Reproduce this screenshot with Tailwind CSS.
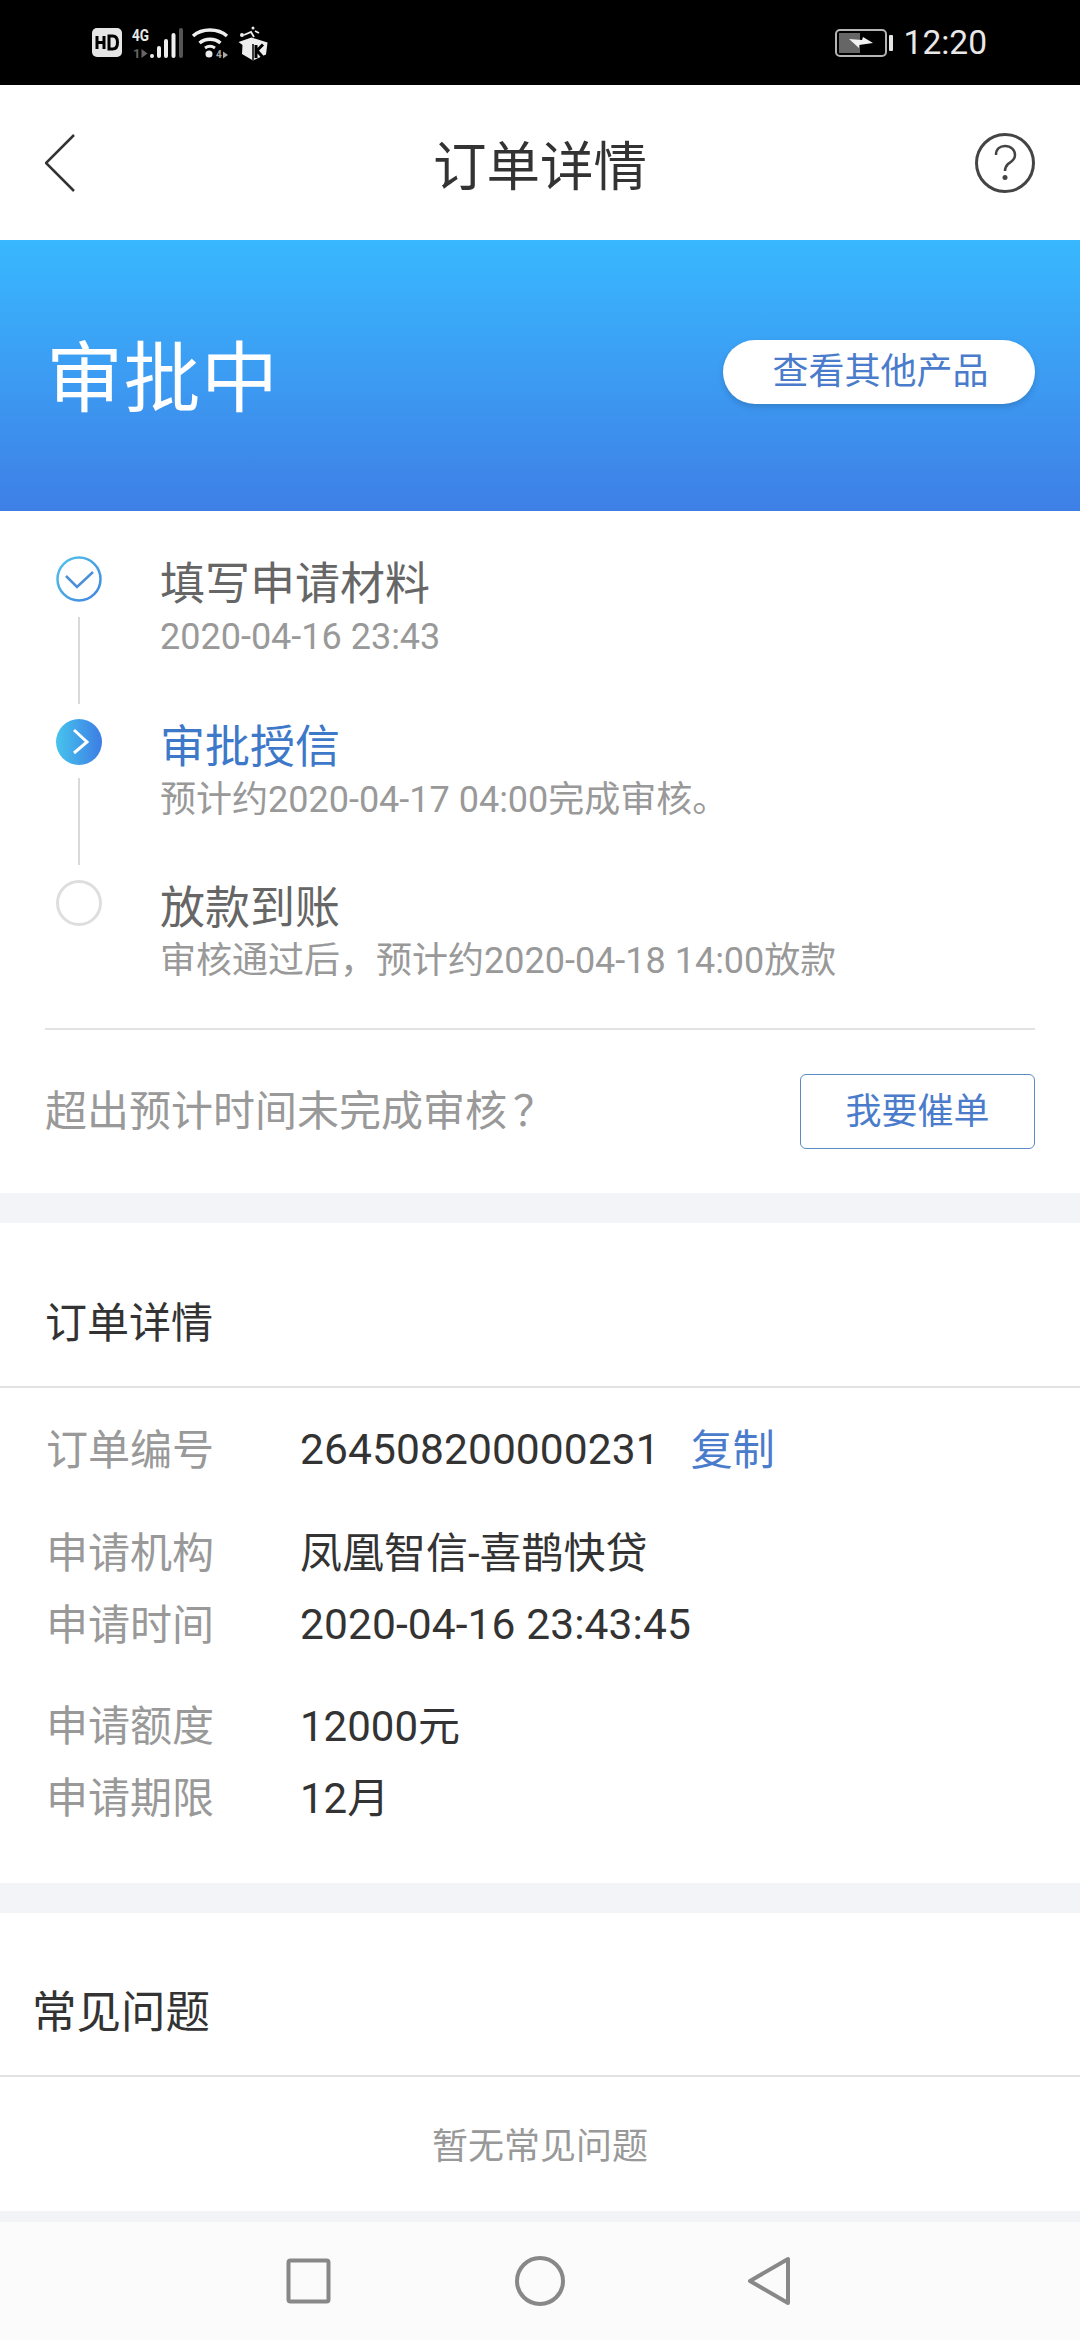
<!DOCTYPE html>
<html lang="zh-CN">
<head>
    <meta charset="UTF-8">
    <meta name="viewport" content="width=device-width, initial-scale=1.0">
    <title>订单详情</title>
    <script src="https://cdn.jsdelivr.net/npm/@tailwindcss/browser@4"></script>
</head>
<body class="bg-[#f2f4f7] font-['Roboto','Noto_Sans_CJK_SC',sans-serif]">
    <div class="w-[1080px] h-[2340px] flex flex-col overflow-hidden">
        <!-- status bar -->
        <div class="h-[85px] bg-black flex items-center justify-between pl-[92px] pr-[93px] text-[#e8e8e8]">
            <div class="flex items-center">
                <svg width="30" height="30" viewBox="0 0 30 30"><rect width="30" height="29" rx="5" fill="#e6e6e6"/><path d="M5 8v13M5 14.500h7M12 8v13" stroke="#000" stroke-width="3" fill="none"/><path d="M17 8v13h3.500c3.500 0 5-2.500 5-6.500s-1.500-6.500-5-6.500z" stroke="#000" stroke-width="3" fill="none"/></svg>
                <svg class="ml-[10px] overflow-visible" width="52" height="32" viewBox="0 0 52 32"><text x="0" y="14" font-size="17" font-weight="700" fill="#e8e8e8" font-family="Roboto" textLength="17" lengthAdjust="spacingAndGlyphs">4G</text><text x="1" y="31" font-size="13" font-weight="700" fill="#666" font-family="Roboto">1</text><path d="M9.500 22l6 4.500-6 4.500z" fill="#666"/><rect x="18" y="27" width="4" height="4" rx="2" fill="#eee"/><rect x="25" y="19" width="4" height="12" rx="2" fill="#eee"/><rect x="32" y="12" width="4" height="19" rx="2" fill="#eee"/><rect x="39.500" y="6" width="4" height="25" rx="2" fill="#eee"/><rect x="47" y="1" width="4" height="30" rx="2" fill="#555"/></svg>
                <svg class="ml-[8px] overflow-visible" width="36" height="32" viewBox="0 0 36 32"><path d="M1 9c9-8 25-8 34 0M7.500 16c6-5 15-5 21 0" stroke="#eee" stroke-width="3.500" fill="none"/><path d="M13 21c3-2 7-2 10 0" stroke="#eee" stroke-width="3" fill="none"/><circle cx="17" cy="27" r="3.500" fill="#eee"/><text x="24" y="31" font-size="10" font-weight="700" fill="#aaa" font-family="Roboto">4</text><path d="M31 24.500l5 3.500-5 3.500z" fill="#aaa"/></svg>
                <svg class="ml-[10px]" width="32" height="36" viewBox="0 0 32 36"><path d="M0.500 17l13-4.500 16 5-1.500 12-13 6-11-6.500 .5-9z" fill="#eee"/><path d="M15 19v16" stroke="#000" stroke-width="1.500"/><path d="M18 20v13M25 19.500l-6 6 6 7" stroke="#000" stroke-width="3" fill="none"/><path d="M6 10l7-3 3 5M17 6l4 2" stroke="#eee" stroke-width="1.800" fill="none"/><circle cx="4" cy="10" r="2" fill="#eee"/><circle cx="15" cy="3" r="1.500" fill="#eee"/></svg>
            </div>
            <div class="flex items-center">
                <svg width="58" height="28" viewBox="0 0 58 28"><rect x="1" y="1" width="50" height="26" rx="4" fill="none" stroke="#b5b5b5" stroke-width="2"/><rect x="4" y="4" width="21" height="20" fill="#666"/><path d="M14 10l13 1 1-3 10 6-14 2 0 3z" fill="#f2f2f2"/><rect x="54" y="6" width="4" height="16" rx="1" fill="#e5e5e5"/></svg>
                <span class="ml-[11px] text-[33.500px] leading-none">12:20</span>
            </div>
        </div>

        <!-- nav -->
        <div class="h-[155px] bg-white flex items-center justify-between px-[45px]">
            <div class="w-[60px]">
                <svg width="30" height="58" viewBox="0 0 30 58"><path d="M29 1L1 29l28 28" fill="none" stroke="#333" stroke-width="2.500"/></svg>
            </div>
            <h1 class="text-[53.500px] text-[#333] pt-[11px]">订单详情</h1>
            <svg width="60" height="60" viewBox="0 0 60 60"><circle cx="30" cy="30" r="28.500" fill="none" stroke="#444" stroke-width="3"/><path d="M21 22C21 16 25 13 30 13C36 13 40 17 40 22C40 27 36 29 33 31C31 33 30 34 30 38" fill="none" stroke="#444" stroke-width="2.500"/><circle cx="30" cy="44.500" r="2.500" fill="#444"/></svg>
        </div>

        <!-- status banner -->
        <div class="h-[271px] bg-gradient-to-b from-[#38b8fe] to-[#3e7fe6] flex items-center justify-between pl-[46px] pr-[45px]">
            <div class="text-[77px] text-white tracking-[0.500px] pt-[11px]">审批中</div>
            <div class="w-[312px] h-[64px] mb-[7px] pl-[3px] rounded-full bg-white shadow-[0_3px_6px_rgba(0,0,0,0.15)] flex items-center justify-center text-[36px] text-[#4a7ccb]">查看其他产品</div>
        </div>

        <!-- progress -->
        <div class="bg-white h-[682px] flex flex-col px-[45px]">
            <div class="pt-[45px] h-[517px] flex flex-col">
                <div class="flex h-[163px]">
                    <div class="w-[68px] flex flex-col items-center">
                        <svg width="46" height="46" viewBox="0 0 46 46"><defs><linearGradient id="g1" x1="0" y1="0" x2="1" y2="1"><stop offset="0" stop-color="#52c5ea"/><stop offset="1" stop-color="#4083e0"/></linearGradient></defs><circle cx="23" cy="23" r="21.500" fill="none" stroke="url(#g1)" stroke-width="2.500"/><path d="M10 20l11 11 16-15" fill="none" stroke="#4a8fd8" stroke-width="2.500"/></svg>
                        <div class="w-[2px] h-[87px] bg-[#d9d9d9] mt-[15px]"></div>
                    </div>
                    <div class="ml-[47px]">
                        <div class="text-[45px] leading-[50px] pt-[4px] text-[#666]">填写申请材料</div>
                        <div class="text-[36px] leading-[54px] text-[#999]">2020-04-16 23:43</div>
                    </div>
                </div>
                <div class="flex h-[161px]">
                    <div class="w-[68px] flex flex-col items-center">
                        <svg width="46" height="46" viewBox="0 0 46 46"><defs><linearGradient id="g2" x1="0" y1="0" x2="1" y2="0"><stop offset="0" stop-color="#47c4ed"/><stop offset="1" stop-color="#3d7de4"/></linearGradient></defs><circle cx="23" cy="23" r="23" fill="url(#g2)"/><path d="M18 11l13 12-13 11" fill="none" stroke="#fff" stroke-width="3"/></svg>
                        <div class="w-[2px] h-[87px] bg-[#d9d9d9] mt-[13px]"></div>
                    </div>
                    <div class="ml-[47px]">
                        <div class="text-[45px] leading-[50px] pt-[4px] text-[#3d78c9]">审批授信</div>
                        <div class="text-[36px] leading-[54px] text-[#999]">预计约2020-04-17 04:00完成审核。</div>
                    </div>
                </div>
                <div class="flex">
                    <div class="w-[68px] flex flex-col items-center">
                        <div class="w-[46px] h-[46px] rounded-full border-[3px] border-[#dedede]"></div>
                    </div>
                    <div class="ml-[47px]">
                        <div class="text-[45px] leading-[50px] pt-[4px] text-[#666]">放款到账</div>
                        <div class="text-[36px] leading-[54px] text-[#999]">审核通过后，预计约2020-04-18 14:00放款</div>
                    </div>
                </div>
            </div>
            <div class="border-t-2 border-[#e2e2e2] flex items-center justify-between h-[165px]">
                <div class="text-[42px] text-[#999]">超出预计时间未完成审核<span class="ml-[6px]">？</span></div>
                <div class="w-[235px] h-[75px] rounded-[6px] border-[1.500px] border-[#5a8cc4] flex items-center justify-center text-[36px] text-[#4a7ccb]">我要催单</div>
            </div>
        </div>

        <!-- order details -->
        <div class="bg-white mt-[30px] h-[660px]">
            <div class="h-[165px] border-b-2 border-[#e2e2e2] flex items-center pl-[45px] pt-[37px] text-[42px] text-[#333]">订单详情</div>
            <div class="pl-[46px] pt-[28px] text-[42px] text-[#333]">
                <div class="flex h-[68px] items-center"><span class="w-[254px] text-[#999]">订单编号</span><span class="text-[42.500px] tracking-[0.100px]">264508200000231</span><span class="ml-[31px] text-[#4a7ccb]">复制</span></div>
                <div class="flex h-[70px] items-center mt-[34px]"><span class="w-[254px] text-[#999]">申请机构</span><span>凤凰智信-喜鹊快贷</span></div>
                <div class="flex h-[70px] items-center mt-[2px]"><span class="w-[254px] text-[#999]">申请时间</span><span class="text-[42.500px] tracking-[0.100px]">2020-04-16 23:43:45</span></div>
                <div class="flex h-[70px] items-center mt-[31px]"><span class="w-[254px] text-[#999]">申请额度</span><span>12000元</span></div>
                <div class="flex h-[70px] items-center mt-[2px]"><span class="w-[254px] text-[#999]">申请期限</span><span>12月</span></div>
            </div>
        </div>

        <!-- faq -->
        <div class="bg-white mt-[30px] h-[298px]">
            <div class="h-[164px] border-b-2 border-[#e2e2e2] flex items-center pl-[32px] pt-[38px] text-[44.500px] text-[#333]">常见问题</div>
            <div class="h-[134px] flex items-center justify-center pt-[6px] text-[36px] text-[#999]">暂无常见问题</div>
        </div>

        <!-- android nav bar -->
        <div class="mt-[11px] h-[118px] bg-[#fbfbfb] flex items-center">
            <svg class="ml-[286px]" width="45" height="46" viewBox="0 0 45 46"><rect x="2.500" y="2.500" width="40" height="41" rx="2" fill="none" stroke="#888" stroke-width="4"/></svg>
            <svg class="ml-[184px]" width="50" height="50" viewBox="0 0 50 50"><circle cx="25" cy="25" r="23" fill="none" stroke="#888" stroke-width="4"/></svg>
            <svg class="ml-[182px]" width="44" height="50" viewBox="0 0 44 50"><path d="M41 3v44L3 25z" fill="none" stroke="#888" stroke-width="4" stroke-linejoin="round"/></svg>
        </div>
    </div>
</body>
</html>
